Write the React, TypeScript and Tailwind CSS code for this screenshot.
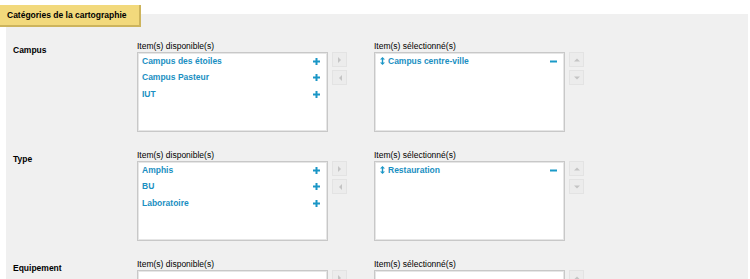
import React from 'react';

type Row = {
  label: string;
  available: string[];
  selected: string[];
};

const rows: Row[] = [
  { label: 'Campus', available: ['Campus des étoiles', 'Campus Pasteur', 'IUT'], selected: ['Campus centre-ville'] },
  { label: 'Type', available: ['Amphis', 'BU', 'Laboratoire'], selected: ['Restauration'] },
  { label: 'Equipement', available: [], selected: [] },
];

function Plus() {
  return (
    <svg width="7" height="7" viewBox="0 0 7 7" className="shrink-0">
      <rect x="2.5" y="0" width="2" height="7" fill="#1a96c6" />
      <rect x="0" y="2.5" width="7" height="2" fill="#1a96c6" />
    </svg>
  );
}

function Minus() {
  return (
    <svg width="7" height="7" viewBox="0 0 7 7" className="shrink-0">
      <rect x="0" y="2.5" width="7" height="2" fill="#1a9ac8" />
    </svg>
  );
}

function Grip() {
  return (
    <svg width="5" height="8" viewBox="0 0 5 8" className="shrink-0">
      <path d="M2.5 0 L5 2.5 L0 2.5 Z" fill="#1a96c6" />
      <rect x="1.8" y="2" width="1.4" height="4" fill="#1a96c6" />
      <path d="M2.5 8 L5 5.5 L0 5.5 Z" fill="#1a96c6" />
    </svg>
  );
}

// small gray arrow for the side buttons
function Arrow({ dir }: { dir: 'left' | 'right' | 'up' | 'down' }) {
  const d = {
    right: 'M2 1 L5 4 L2 7 Z',
    left: 'M6 1 L3 4 L6 7 Z',
    up: 'M1 5.5 L4 2.5 L7 5.5 Z',
    down: 'M1 2.5 L4 5.5 L7 2.5 Z',
  }[dir];
  return (
    <svg width="8" height="8" viewBox="0 0 8 8">
      <path d={d} fill="#c4c4c4" />
    </svg>
  );
}

function SideButton({ dir }: { dir: 'left' | 'right' | 'up' | 'down' }) {
  return (
    <div className="w-[15px] h-[15px] flex items-center justify-center bg-[#ececec] border border-[#e3e3e3]">
      <Arrow dir={dir} />
    </div>
  );
}

function ListBox({ items, selected }: { items: string[]; selected?: boolean }) {
  return (
    <div className="w-[191px] h-[80px] bg-white border border-[#c8c8c8] shadow-[inset_0_0_0_1px_#e6e6e6]">
      {items.map((it) => (
        <div key={it} className="h-[16.5px] flex items-center pl-[4px] pr-[7px]">
          {selected && (
            <span className="ml-[1px] mr-[3px] flex items-center">
              <Grip />
            </span>
          )}
          <span className="flex-1 font-bold text-[#1a8fc2]">{it}</span>
          {selected ? <Minus /> : <Plus />}
        </div>
      ))}
    </div>
  );
}

export default function App() {
  return (
    <div
      className="w-[750px] h-[279px] overflow-hidden bg-white text-[8.5px] text-black"
      style={{ fontFamily: '"Liberation Sans", Arial, sans-serif' }}
    >
      <div className="pt-[5px]">
        <div className="relative z-10 w-[141px] h-[22px] bg-[#f2d97c] border-r-2 border-b-2 border-[#cdb45c] flex items-center pl-[7px] font-bold">
          Catégories de la cartographie
        </div>
        <div className="-mt-[13px] ml-[6px] mr-[2px] bg-[#f0f0f0] pt-[27px] pl-[7px] h-[300px]">
          {rows.map((row) => (
            <div key={row.label} className="flex mb-[18px]">
              <div className="w-[124px] pt-[3px] font-bold">{row.label}</div>
              <div>
                <div className="h-[11px] leading-[11px]">Item(s) disponible(s)</div>
                <div className="flex">
                  <ListBox items={row.available} />
                  <div className="ml-[4px] flex flex-col gap-[3px]">
                    <SideButton dir="right" />
                    <SideButton dir="left" />
                  </div>
                </div>
              </div>
              <div className="ml-[27px]">
                <div className="h-[11px] leading-[11px]">Item(s) sélectionné(s)</div>
                <div className="flex">
                  <ListBox items={row.selected} selected />
                  <div className="ml-[4px] flex flex-col gap-[3px]">
                    <SideButton dir="up" />
                    <SideButton dir="down" />
                  </div>
                </div>
              </div>
            </div>
          ))}
        </div>
      </div>
    </div>
  );
}
